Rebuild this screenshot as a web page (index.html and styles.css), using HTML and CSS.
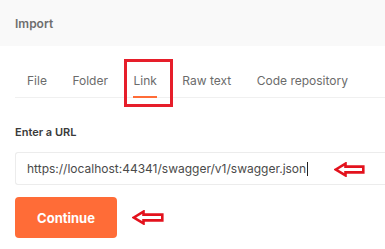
FILE: index.html
```html
<!DOCTYPE html>
<html>
<head>
<meta charset="utf-8">
<link rel="stylesheet" href="styles.css">
</head>
<body>
<header class="header">Import</header>
<main class="content">
  <nav class="tabs">
    <span class="tab">File</span>
    <span class="tab">Folder</span>
    <span class="tab tab-active">Link<span class="mark-box"></span></span>
    <span class="tab">Raw text</span>
    <span class="tab">Code repository</span>
  </nav>
  <label class="label">Enter a URL</label>
  <div class="input-wrap">
    <div class="input"><span class="input-text">https://localhost:44341/swagger/v1/swagger.json</span><span class="caret"></span></div>
    <svg class="arrow arrow-input" width="31" height="15" viewBox="0 0 31 15"><path d="M1.8 7.5 L11.5 1.6 L11.5 4.6 L29.3 4.6 L29.3 10.4 L11.5 10.4 L11.5 13.4 Z" fill="#fff" stroke="#e3121d" stroke-width="2.6" stroke-linejoin="miter"/></svg>
  </div>
  <div class="actions">
    <button class="btn">Continue</button>
    <svg class="arrow" width="32" height="15" viewBox="0 0 32 15"><path d="M1.8 7.5 L11.5 1.6 L11.5 4.6 L30.3 4.6 L30.3 10.4 L11.5 10.4 L11.5 13.4 Z" fill="#fff" stroke="#e3121d" stroke-width="2.6" stroke-linejoin="miter"/></svg>
  </div>
</main>
</body>
</html>
```

FILE: styles.css
```css
* { box-sizing: border-box; }
html, body { margin: 0; padding: 0; background: #fff; }
body {
  font-family: Inter, "Noto Sans", "Liberation Sans", sans-serif;
  width: 385px;
  height: 249px;
  overflow: hidden;
}
.header {
  height: 46px;
  background: #f9f9f9;
  padding: 0 15px;
  display: flex;
  align-items: center;
  font-size: 12px;
  font-weight: 600;
  color: #6e6e6e;
}
.content {
  padding: 0 0 0 15px;
}
.tabs {
  display: flex;
  gap: 25.5px;
  padding: 27px 0 0 12px;
  border-bottom: 1px solid #f0f0f0;
}
.tab {
  position: relative;
  font-size: 12px;
  line-height: 16px;
  height: 24px;
  color: #6b6b6b;
  white-space: nowrap;
}
.tab-active::after {
  content: "";
  position: absolute;
  left: 0;
  right: 0;
  bottom: -1px;
  height: 2px;
  background: #ff6c37;
}
.mark-box {
  position: absolute;
  left: -9px;
  top: -14px;
  width: 49px;
  height: 48px;
  border: 3px solid #e61e2a;
}
.label {
  display: block;
  margin-top: 27px;
  font-size: 11px;
  line-height: 14px;
  font-weight: 600;
  color: #3a3a3a;
}
.input-wrap {
  position: relative;
  margin-top: 13px;
}
.input {
  width: 100%;
  height: 33px;
  border: 1px solid #ececec;
  border-right: none;
  border-radius: 3px 0 0 3px;
  padding-left: 11px;
  display: flex;
  align-items: center;
  font-size: 12px;
  color: #4a4a4a;
  white-space: nowrap;
}
.caret {
  display: inline-block;
  width: 1px;
  height: 14px;
  background: #222;
  margin-left: 1px;
}
.arrow-input {
  position: absolute;
  left: 319px;
  top: 10px;
}
.actions {
  display: flex;
  align-items: center;
  gap: 15px;
  margin-top: 12px;
}
.btn {
  width: 102px;
  height: 41px;
  border: none;
  border-radius: 4px;
  background: #ff6c37;
  color: #fff;
  font-family: inherit;
  font-size: 13px;
  font-weight: 700;
  padding: 0;
}
```
